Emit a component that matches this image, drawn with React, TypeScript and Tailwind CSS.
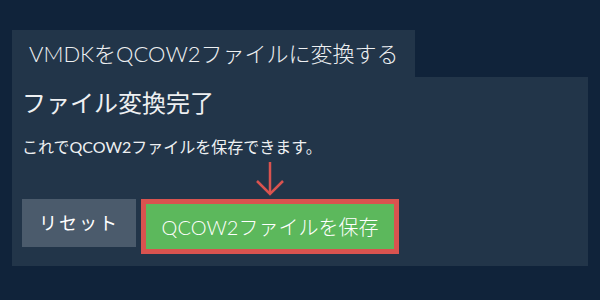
export default function App() {
  return (
    <div
      className="w-[600px] h-[300px] bg-[#10233a] pt-[30px] px-3 text-[#eef0f2]"
      style={{ fontFamily: 'Lato, "Noto Sans CJK JP", sans-serif' }}
    >
      <div className="inline-flex h-[47px] w-[403px] items-center bg-[#223549] pl-[17px] text-[22px] font-light">
        VMDKをQCOW2ファイルに変換する
      </div>
      <div className="h-[189px] bg-[#223549] px-[10px] pt-[10px]">
        <h2 className="text-[24px] leading-[32px]">ファイル変換完了</h2>
        <p className="mt-[18px] text-[16px] leading-[20px]">
          これでQCOW2ファイルを保存できます。
        </p>
        <div className="mt-[42px] flex items-start gap-[5px]">
          <button className="h-[48px] w-[114px] bg-[#4b5b6c] text-[18px] tracking-[2px] text-white">
            リセット
          </button>
          <div className="relative">
            <svg
              className="absolute left-1/2 -translate-x-1/2 -top-[38px]"
              width="32"
              height="36"
              viewBox="0 0 32 36"
              fill="none"
              stroke="#d9534f"
              strokeWidth="2.5"
            >
              <path d="M16 1 V33" />
              <path d="M3 20 L16 33 L29 20" />
            </svg>
            <button className="h-[55px] w-[258px] border-[5px] border-[#d9534f] bg-[#5cb85c] text-[20px] font-light text-white">
              QCOW2ファイルを保存
            </button>
          </div>
        </div>
      </div>
    </div>
  );
}
